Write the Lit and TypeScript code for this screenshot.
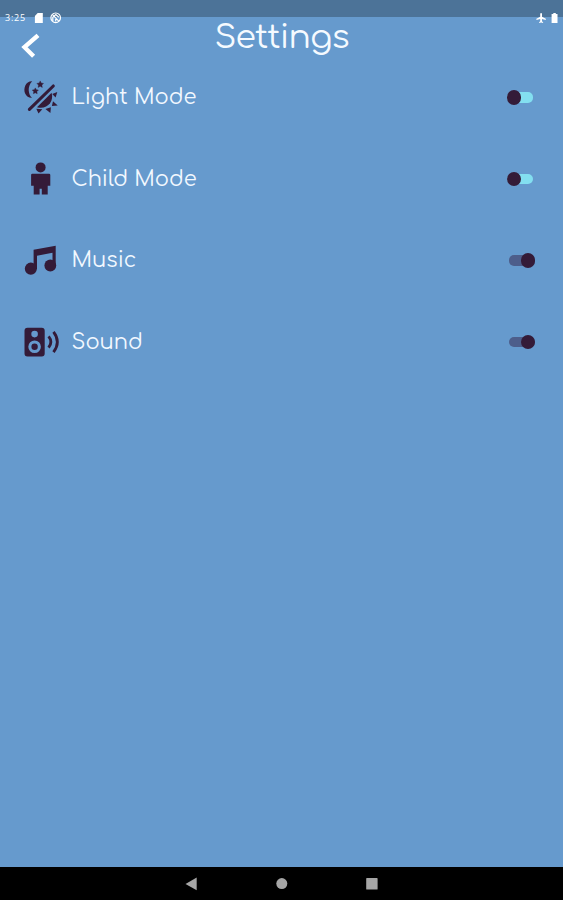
import { LitElement, html, css, svg } from "lit";
import { customElement, property } from "lit/decorators.js";

const icons: Record<string, unknown> = {
  light: svg`
    <path d="M12.2 5.2C5.4 5 3.2 12.6 5 17.2C6.5 20.9 9.5 22 12 21.7C8.3 18.7 6.9 10.5 12.2 5.2Z"/>
    <path d="M20.2 4.9l1 2.1 2.3.4-1.6 1.7.4 2.3-2.1-1.1-2.1 1.1.4-2.3-1.6-1.7 2.3-.4zM15.3 11.9l1 1.8 2.1.4-1.5 1.5.3 2.1-1.9-.9-1.9.9.3-2.1-1.5-1.5 2.1-.4z" stroke="currentColor" stroke-width=".4"/>
    <path d="M33.3 10L9.4 33.3" stroke="currentColor" stroke-width="3.1" stroke-linecap="round"/>
    <path d="M31.6 16.8C34.4 25.8 26.6 34 17 31.2Z"/>
    <path d="M32.2 17.9l5.1-1.9-1.7 5.6zM33 25.3l4.7 4.2-5.8.5zM25.4 33l5.5-1.8-.5 5.9zM16.3 32.8l6 .4-3.8 4.4z"/>`,
  child: svg`
    <circle cx="20.6" cy="10.4" r="5"/>
    <path d="M12.3 16.8h16.8q1.2 0 1.2 1.2v10.7h-2.6v8.9h-5.9v-5.8h-2.2v5.8h-5.9v-8.9h-2.6V18q0-1.2 1.2-1.2z"/>`,
  music: svg`
    <path d="M13.6 10.8L35.7 6.8V26.8H32.5V13.8L17 16.7V30.2H13.6Z"/>
    <ellipse cx="10.8" cy="29.7" rx="6" ry="6.1"/><ellipse cx="30.3" cy="26.4" rx="5.9" ry="6"/>`,
  sound: svg`
    <g transform="translate(0 -1.3)">
      <path fill-rule="evenodd" d="M7.5 8h14.2q3 0 3 3v22.7q0 3-3 3H7.5q-3 0-3-3V11q0-3 3-3zM14.6 11.1a3.3 3.3 0 1 0 0 6.6 3.3 3.3 0 0 0 0-6.6zM14.6 20.7a6.3 6.3 0 1 0 0 12.6 6.3 6.3 0 0 0 0-12.6z"/>
      <circle cx="14.6" cy="27" r="3.2"/>
      <path d="M28.6 16.6Q33.1 22.1 28.6 28M33.5 12.2Q41.2 22.1 33.5 32.4" fill="none" stroke="currentColor" stroke-width="2.8"/>
    </g>`,
};

@customElement("toggle-switch")
class ToggleSwitch extends LitElement {
  @property({ type: Boolean, reflect: true }) on = false;
  static styles = css`
    :host { display: block; margin-top: 1.2px; --track: #83dff0; }
    :host([on]) { --track: #4d5e8b; }
    .track { width: 26px; height: 10.5px; border-radius: 5px; background: var(--track); display: flex; align-items: center; }
    .thumb { width: 14.4px; height: 14.4px; border-radius: 50%; background: #341b38; flex: none; }
    :host([on]) .track { justify-content: flex-end; }
  `;
  render() {
    return html`<div class="track"><div class="thumb"></div></div>`;
  }
}

@customElement("setting-row")
class SettingRow extends LitElement {
  @property() label = "";
  @property() icon = "";
  @property({ type: Boolean }) on = false;
  static styles = css`
    :host { display: flex; align-items: center; height: 81.6px; padding: 0 28px 0 20px; color: #341b38; }
    svg { width: 42px; height: 42px; fill: currentColor; flex: none; }
    .label { flex: 1; margin-left: 9.5px; padding-top: 0.6px; font-size: 21px; line-height: 30px; color: #f2f8ff; white-space: nowrap; }
    toggle-switch { margin-right: 2px; }
    toggle-switch[on] { margin-right: 0; }
  `;
  render() {
    return html`
      <svg viewBox="0 0 42 42">${icons[this.icon]}</svg>
      <span class="label">${this.label}</span>
      <toggle-switch ?on=${this.on}></toggle-switch>`;
  }
}

@customElement("app-root")
class AppRoot extends LitElement {
  static styles = css`
    :host { display: flex; flex-direction: column; position: relative; height: 900px; overflow: hidden;
      background: #669acd; font-family: Comfortaa, Quicksand, Lato, sans-serif; color: #fff; }
    .shade { height: 17px; background: #4c7398; flex: none; }
    .status { position: absolute; left: 5px; right: 4px; top: 11px; height: 14px; display: flex; align-items: center; }
    .time { font: 9px/14px "Open Sans", sans-serif; width: 29px; letter-spacing: 0.8px; }
    .status svg { height: 14px; fill: #fff; }
    .gap { flex: 1; }
    header { height: 39px; display: grid; grid-template-columns: 60px 1fr 60px; flex: none; }
    .back { width: 60px; height: 45px; }
    h1 { margin: 0; text-align: center; font-weight: 400; font-size: 33px; line-height: 42px; letter-spacing: -0.8px; color: #f5faff; }
    main { flex: 1; }
    nav { height: 33px; background: #000; display: flex; justify-content: center; align-items: center; flex: none; }
    nav svg { width: 200px; height: 33px; fill: #a6a6a6; }
  `;
  render() {
    return html`
      <div class="shade"></div>
      <div class="status">
        <span class="time">3:25</span>
        <svg width="30" viewBox="0 0 30 14">
          <path d="M3.7 2H8.8V12H.9V5z"/>
          <circle cx="21.7" cy="6.8" r="4.8" fill="none" stroke="#fff" stroke-width="1.2"/>
          <path d="M18.8 10V6.2l3-2.6 3 2.6M18.5 3.6l6.5 6.7M21.7 6.8v3.6" fill="none" stroke="#fff" stroke-width="1.2"/>
        </svg>
        <span class="gap"></span>
        <svg width="24" viewBox="0 0 24 14">
          <path d="M6.1 2q.9 0 .9 1v2.8l3.8 2v1.1L7 8v2.3l1.1.9v.7l-2-.5-2 .5v-.7l1.1-.9V8l-3.8.9V7.8l3.8-2V3q0-1 .9-1z"/>
          <path d="M18.3 2h2.5v1.1h1.7V12h-5.9V3.1h1.7z"/>
        </svg>
      </div>
      <header>
        <svg class="back" viewBox="0 0 60 45">
          <path d="M38 18.3L24.5 30.2L33.6 39.3" fill="none" stroke="#fff" stroke-width="4.4"/>
        </svg>
        <h1>Settings</h1>
      </header>
      <main>
        <setting-row icon="light" label="Light Mode"></setting-row>
        <setting-row icon="child" label="Child Mode"></setting-row>
        <setting-row icon="music" label="Music" on></setting-row>
        <setting-row icon="sound" label="Sound" on></setting-row>
      </main>
      <nav>
        <svg viewBox="182 867 200 33">
          <path d="M185.5 884L196.7 877.5V890.3z"/>
          <circle cx="281.8" cy="883.6" r="5.5"/>
          <rect x="366.2" y="878" width="11.4" height="11.6" rx=".7"/>
        </svg>
      </nav>`;
  }
}
